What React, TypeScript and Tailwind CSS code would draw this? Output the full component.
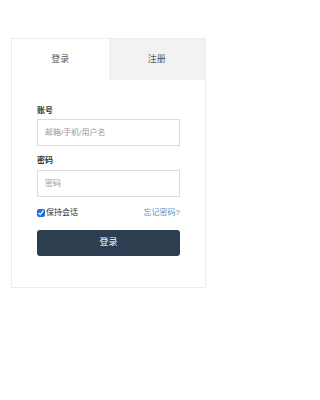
import React, { useState } from 'react';

export default function App() {
  const [tab, setTab] = useState<'login' | 'register'>('login');
  const [remember, setRemember] = useState(true);

  return (
    <div className="min-h-[400px] w-full bg-white pt-[38px] font-['Liberation_Sans','Noto_Sans_CJK_SC',sans-serif]">
      <div className="mx-[11px] w-[195px] border border-[#ececec] bg-white pb-[31px]">
        {/* Tabs */}
        <div className="flex h-[41px]">
          <button
            onClick={() => setTab('login')}
            className={`flex-1 text-[9px] text-[#555] ${tab === 'login' ? 'bg-white' : 'bg-[#f2f2f2]'}`}
          >
            登录
          </button>
          <button
            onClick={() => setTab('register')}
            className={`flex-1 text-[9px] text-[#555] ${tab === 'register' ? 'bg-white' : 'bg-[#f2f2f2]'}`}
          >
            注册
          </button>
        </div>

        <form className="mx-[25px] pt-[25px]" onSubmit={(e) => e.preventDefault()}>
          <label className="block text-[8px] font-bold leading-[12px] text-[#333]">账号</label>
          <input
            placeholder="邮箱/手机/用户名"
            className="mt-[2px] h-[27px] w-full border border-[#dcdcdc] px-[7px] text-[8px] outline-none placeholder:text-[#999]"
          />
          <label className="mt-[9px] block text-[8px] font-bold leading-[12px] text-[#333]">密码</label>
          <input
            type="password"
            placeholder="密码"
            className="mt-[3px] h-[27px] w-full border border-[#dcdcdc] px-[7px] text-[8px] outline-none placeholder:text-[#999]"
          />

          <div className="mt-[10px] flex items-center justify-between">
            <label className="flex items-center gap-[1px] text-[8px] text-[#333]">
              <input
                type="checkbox"
                checked={remember}
                onChange={(e) => setRemember(e.target.checked)}
                className="m-0 h-[8px] w-[8px] accent-[#1e6fd9]"
              />
              保持会话
            </label>
            <a href="#" className="text-[8px] text-[#5b8fbf]">忘记密码?</a>
          </div>

          <button
            type="submit"
            className="mt-[11px] h-[26px] w-full rounded-[3px] bg-[#2d3e50] text-[9px] text-white"
          >
            登录
          </button>
        </form>
      </div>
    </div>
  );
}
